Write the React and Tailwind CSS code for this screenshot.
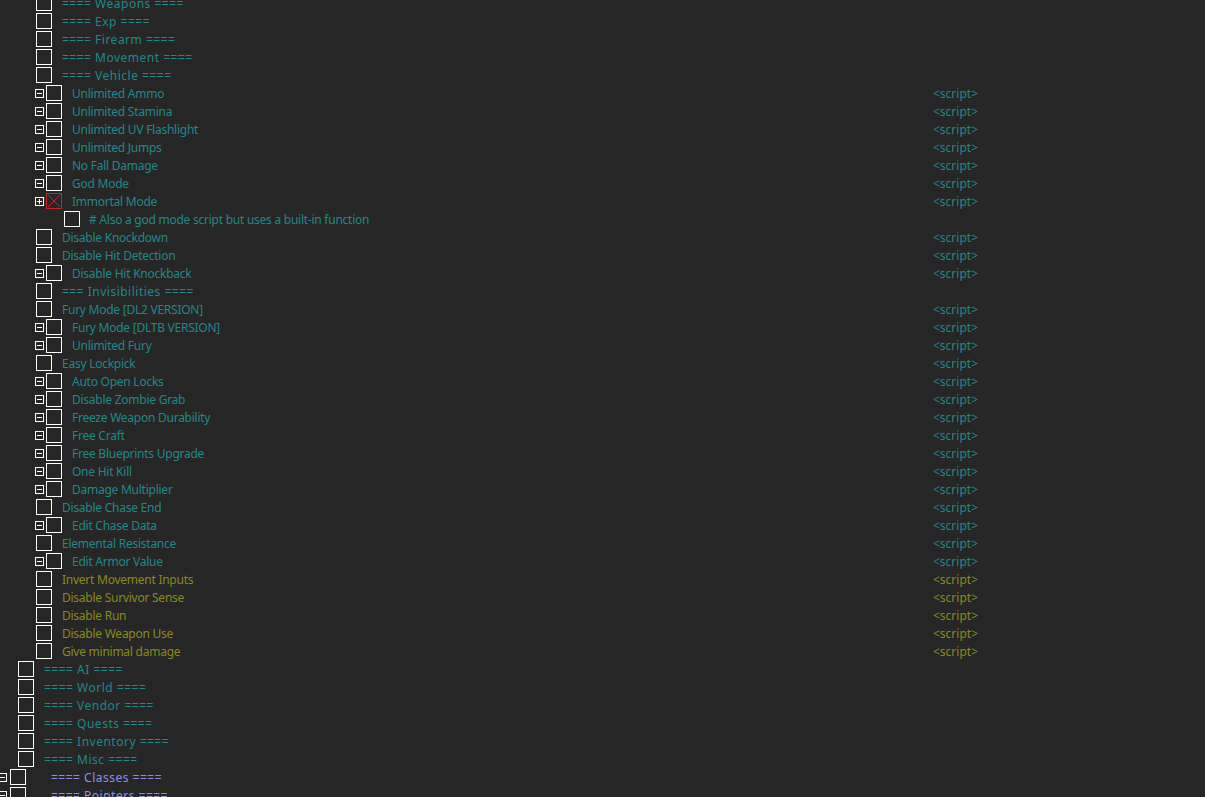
import React from "react";

const T = "text-[#1d8a8c]";
const O = "text-[#8a8a18]";
const P = "text-[#8c8cf2]";

const rows = [
  ["g2", "==== Weapons ====", T, false],
  ["g2", "==== Exp ====", T, false],
  ["g2", "==== Firearm ====", T, false],
  ["g2", "==== Movement ====", T, false],
  ["g2", "==== Vehicle ====", T, false],
  ["e2", "Unlimited Ammo", T, true],
  ["e2", "Unlimited Stamina", T, true],
  ["e2", "Unlimited UV Flashlight", T, true],
  ["e2", "Unlimited Jumps", T, true],
  ["e2", "No Fall Damage", T, true],
  ["e2", "God Mode", T, true],
  ["x2", "Immortal Mode", T, true],
  ["c3", "# Also a god mode script but uses a built-in function", T, false],
  ["g2", "Disable Knockdown", T, true],
  ["g2", "Disable Hit Detection", T, true],
  ["e2", "Disable Hit Knockback", T, true],
  ["g2", "=== Invisibilities ====", T, false],
  ["g2", "Fury Mode [DL2 VERSION]", T, true],
  ["e2", "Fury Mode [DLTB VERSION]", T, true],
  ["e2", "Unlimited Fury", T, true],
  ["g2", "Easy Lockpick", T, true],
  ["e2", "Auto Open Locks", T, true],
  ["e2", "Disable Zombie Grab", T, true],
  ["e2", "Freeze Weapon Durability", T, true],
  ["e2", "Free Craft", T, true],
  ["e2", "Free Blueprints Upgrade", T, true],
  ["e2", "One Hit Kill", T, true],
  ["e2", "Damage Multiplier", T, true],
  ["g2", "Disable Chase End", T, true],
  ["e2", "Edit Chase Data", T, true],
  ["g2", "Elemental Resistance", T, true],
  ["e2", "Edit Armor Value", T, true],
  ["g2", "Invert Movement Inputs", O, true],
  ["g2", "Disable Survivor Sense", O, true],
  ["g2", "Disable Run", O, true],
  ["g2", "Disable Weapon Use", O, true],
  ["g2", "Give minimal damage", O, true],
  ["g1", "==== AI ====", T, false],
  ["g1", "==== World ====", T, false],
  ["g1", "==== Vendor ====", T, false],
  ["g1", "==== Quests ====", T, false],
  ["g1", "==== Inventory ====", T, false],
  ["g1", "==== Misc ====", T, false],
  ["e0", "==== Classes ====", P, false],
  ["e0", "==== Pointers ====", P, false],
];

function Expander({ plus }) {
  return (
    <div className="relative w-[9px] h-[9px] border border-white shrink-0">
      <div className="absolute left-[1px] top-[3px] w-[5px] h-px bg-white" />
      {plus && <div className="absolute left-[3px] top-[1px] w-px h-[5px] bg-white" />}
    </div>
  );
}

function Check({ red }) {
  if (red) {
    return (
      <div className="w-[16px] h-[16px] border border-[#c8282c] shrink-0">
        <svg width="14" height="14" viewBox="0 0 14 14" className="block">
          <path d="M1 1L13 13M13 1L1 13" stroke="#c8282c" strokeWidth="1" />
        </svg>
      </div>
    );
  }
  return <div className="w-[16px] h-[16px] border border-white shrink-0" />;
}

function Row({ kind, text, color, script }) {
  let left;
  if (kind === "g2") {
    left = (
      <>
        <div className="w-[36px] shrink-0" />
        <Check />
        <div className="w-[10px] shrink-0" />
      </>
    );
  } else if (kind === "g1") {
    left = (
      <>
        <div className="w-[18px] shrink-0" />
        <Check />
        <div className="w-[10px] shrink-0" />
      </>
    );
  } else if (kind === "e2" || kind === "x2") {
    left = (
      <>
        <div className="w-[35px] shrink-0" />
        <Expander plus={kind === "x2"} />
        <div className="w-[2px] shrink-0" />
        <Check red={kind === "x2"} />
        <div className="w-[10px] shrink-0" />
      </>
    );
  } else if (kind === "c3") {
    left = (
      <>
        <div className="w-[64px] shrink-0" />
        <Check />
        <div className="w-[9px] shrink-0" />
      </>
    );
  } else {
    left = (
      <>
        <div className="w-[0px] shrink-0 -ml-[2px]" />
        <Expander />
        <div className="w-[3px] shrink-0" />
        <Check />
        <div className="w-[25px] shrink-0" />
      </>
    );
  }
  const isHeader = text.startsWith("=");
  return (
    <div className="flex items-center h-[18px]">
      <div className="flex items-center w-[933px] shrink-0">
        {left}
        <span
          className={`${color} whitespace-nowrap pt-px ${
            isHeader ? "tracking-[0.5px]" : "tracking-[-0.25px]"
          }`}
        >
          {text}
        </span>
      </div>
      {script && <span className={`${color} pt-px`}>&lt;script&gt;</span>}
    </div>
  );
}

export default function App() {
  return (
    <div
      className="w-[1205px] h-[797px] overflow-hidden bg-[#262626] text-[12px] leading-[18px]"
      style={{ fontFamily: '"Segoe UI", "Noto Sans", "Open Sans", sans-serif' }}
    >
      <div className="flex flex-col -mt-[6px]">
        {rows.map(([k, t, c, s], i) => (
          <Row key={i} kind={k} text={t} color={c} script={s} />
        ))}
      </div>
    </div>
  );
}
